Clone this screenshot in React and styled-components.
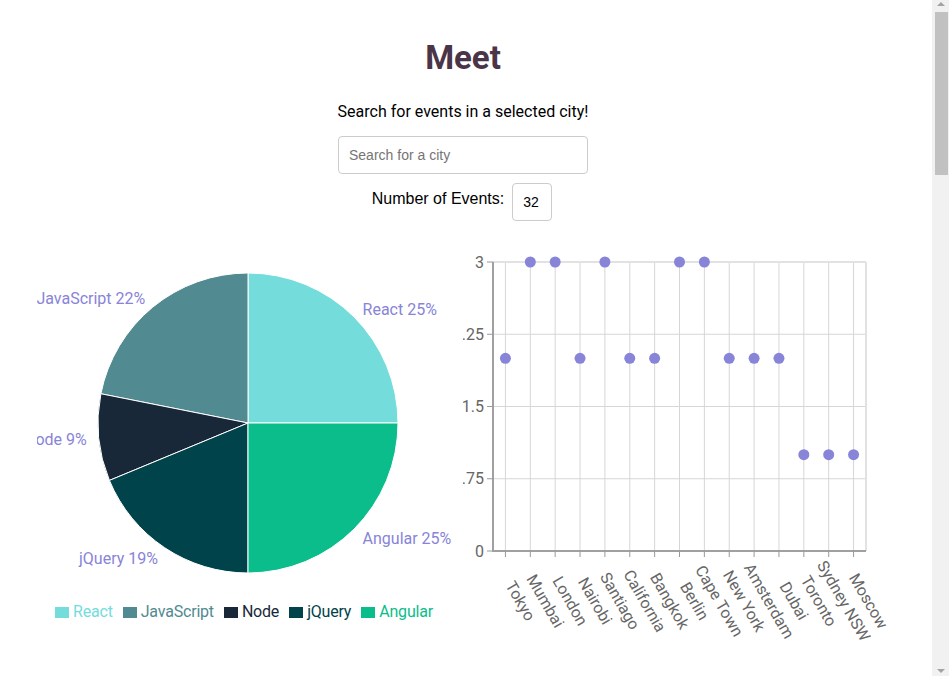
import React from "react";
import styled, { createGlobalStyle } from "styled-components";

const Global = createGlobalStyle`
  html, body { overflow: hidden; }
  body { margin: 0; background: #fff; font-family: Roboto, "Noto Sans", sans-serif; color: #000; }
`;

const Page = styled.div`
  width: 926px;
  display: flex;
  flex-direction: column;
  align-items: center;
`;

const ScrollTrack = styled.div`
  position: fixed;
  top: 0;
  right: 0;
  width: 17px;
  height: 100vh;
  background: #f1f1f1;
`;

const ScrollThumb = styled.div`
  position: absolute;
  top: 12px;
  left: 3px;
  width: 13px;
  height: 163px;
  background: #c1c1c1;
`;

const ScrollArrow = styled.div`
  position: absolute;
  left: 5px;
  width: 0;
  height: 0;
  border-left: 4px solid transparent;
  border-right: 4px solid transparent;
  ${(p) => (p.$down ? "bottom: 3px; border-top: 4px solid #a3a3a3;" : "top: 2px; border-bottom: 4px solid #a3a3a3;")}
`;

const Title = styled.h1`
  margin: 34px 0 0;
  font-size: 33px;
  line-height: 48px;
  font-weight: 700;
  color: #4a3447;
`;

const Subtitle = styled.p`
  margin: 18px 0 0;
  font-size: 16px;
  line-height: 24px;
`;

const CityInput = styled.input`
  margin-top: 12px;
  box-sizing: border-box;
  width: 250px;
  height: 38px;
  padding: 0 10px;
  border: 1px solid #ccc;
  border-radius: 4px;
  font-family: "Liberation Sans", Arial, sans-serif;
  font-size: 14px;
  color: #000;
  outline: none;
  &::placeholder { color: #757575; }
`;

const NumberRow = styled.div`
  margin-top: 9px;
  margin-left: -2px;
  display: flex;
  align-items: center;
  gap: 8px;
`;

const NumberLabel = styled.label`
  font-family: "Liberation Sans", Arial, sans-serif;
  font-size: 16px;
  margin-top: -6px;
`;

const NumberInput = styled.input`
  box-sizing: border-box;
  width: 40px;
  height: 38px;
  padding: 0 10px;
  border: 1px solid #ccc;
  border-radius: 4px;
  font-family: "Liberation Sans", Arial, sans-serif;
  font-size: 14px;
  color: #000;
  outline: none;
  -moz-appearance: textfield;
  &::-webkit-outer-spin-button,
  &::-webkit-inner-spin-button { -webkit-appearance: none; margin: 0; }
`;

const ChartsRow = styled.div`
  margin-top: 9px;
  display: flex;
`;

const ChartBox = styled.div`
  width: 426px;
  display: flex;
  flex-direction: column;
`;

const ChartSvg = styled.svg`
  display: block;
  overflow: hidden;
  font-family: Roboto, "Noto Sans", sans-serif;
  font-size: 16px;
`;

const Legend = styled.ul`
  margin: 0;
  padding: 0 12px 0 0;
  list-style: none;
  display: flex;
  justify-content: center;
  gap: 10px;
  line-height: 24px;
  font-size: 16px;
  letter-spacing: -0.2px;
`;

const LegendItem = styled.li`
  display: flex;
  align-items: center;
  color: ${(p) => p.$color};
`;

const LegendSwatch = styled.span`
  width: 14px;
  height: 11px;
  margin-right: 4px;
  background: ${(p) => p.$color};
`;

const pieData = [
  { name: "React", value: 8, color: "#75dcdc" },
  { name: "JavaScript", value: 7, color: "#518a90" },
  { name: "Node", value: 3, color: "#182838" },
  { name: "jQuery", value: 6, color: "#01434a" },
  { name: "Angular", value: 8, color: "#0bbd8a" },
];

const scatterData = [
  ["Tokyo", 2], ["Mumbai", 3], ["London", 3], ["Nairobi", 2], ["Santiago", 3],
  ["California", 2], ["Bangkok", 2], ["Berlin", 3], ["Cape Town", 3], ["New York", 2],
  ["Amsterdam", 2], ["Dubai", 2], ["Toronto", 1], ["Sydney NSW", 1], ["Moscow", 1],
];

const rad = (d) => (d * Math.PI) / 180;

function PieChart() {
  const cx = 211, cy = 193, r = 150, lr = 162;
  const total = pieData.reduce((s, d) => s + d.value, 0);
  let start = 0;
  const slices = pieData.map((d) => {
    const sweep = (d.value / total) * 360;
    const a0 = start, a1 = start + sweep;
    start = a1;
    const x0 = cx + r * Math.cos(rad(a0)), y0 = cy - r * Math.sin(rad(a0));
    const x1 = cx + r * Math.cos(rad(a1)), y1 = cy - r * Math.sin(rad(a1));
    const large = sweep > 180 ? 1 : 0;
    const path = `M${cx},${cy} L${x0},${y0} A${r},${r} 0 ${large} 0 ${x1},${y1} Z`;
    const mid = (a0 + a1) / 2;
    const lx = cx + lr * Math.cos(rad(mid)), ly = cy - lr * Math.sin(rad(mid));
    return { ...d, path, lx, ly, pct: Math.round((d.value / total) * 100) };
  });
  return (
    <ChartBox>
      <ChartSvg width="426" height="370">
        {slices.map((s) => (
          <path key={s.name} d={s.path} fill={s.color} stroke="#fff" strokeWidth="1" />
        ))}
        {slices.map((s) => (
          <text key={s.name + "l"} x={s.lx} y={s.ly + 1} fill="#8884d8" dominantBaseline="central"
            textAnchor={s.lx > cx ? "start" : "end"}>
            {`${s.name} ${s.pct}%`}
          </text>
        ))}
      </ChartSvg>
      <Legend>
        {pieData.map((d) => (
          <LegendItem key={d.name} $color={d.color}>
            <LegendSwatch $color={d.color} />
            {d.name}
          </LegendItem>
        ))}
      </Legend>
    </ChartBox>
  );
}

function ScatterChart() {
  const left = 30, right = 403, top = 32, bottom = 321;
  const step = (right - left) / scatterData.length;
  const xs = scatterData.map((_, i) => left + step * (i + 0.5));
  const yOf = (v) => top + ((3 - v) / 3) * (bottom - top);
  const ticks = [0, 0.75, 1.5, 2.25, 3];
  return (
    <ChartBox>
      <ChartSvg width="426" height="420">
        {ticks.map((t) => (
          <line key={"h" + t} x1={left} x2={right} y1={yOf(t)} y2={yOf(t)} stroke="#d6d6d6" />
        ))}
        {xs.map((x, i) => (
          <line key={"v" + i} x1={x} x2={x} y1={top} y2={bottom} stroke="#d6d6d6" />
        ))}
        <line x1={right} x2={right} y1={top} y2={bottom} stroke="#e2e2e2" strokeWidth="2" />
        <line x1={left} x2={right} y1={top} y2={top} stroke="#e2e2e2" strokeWidth="2" />
        <line x1={left} x2={left} y1={top} y2={bottom + 1} stroke="#a0a0a0" strokeWidth="2" />
        <line x1={left - 1} x2={right} y1={bottom} y2={bottom} stroke="#a0a0a0" strokeWidth="2" />
        {ticks.map((t) => (
          <g key={"yt" + t}>
            <line x1={left - 6} x2={left} y1={yOf(t)} y2={yOf(t)} stroke="#999" />
            <text x={left - 9} y={yOf(t)} fill="#666" textAnchor="end" dominantBaseline="central">{t}</text>
          </g>
        ))}
        {xs.map((x, i) => (
          <g key={"xt" + i}>
            <line x1={x} x2={x} y1={bottom} y2={bottom + 6} stroke="#999" />
            <text x={x + 15} y={371} fill="#666" textAnchor="middle" dominantBaseline="central"
              transform={`rotate(60 ${x + 15} 371)`}>
              {scatterData[i][0]}
            </text>
          </g>
        ))}
        {xs.map((x, i) => (
          <circle key={"c" + i} cx={x} cy={yOf(scatterData[i][1])} r="5.5" fill="#8884d8" />
        ))}
      </ChartSvg>
    </ChartBox>
  );
}

export default function App() {
  return (
    <Page>
      <Global />
      <Title>Meet</Title>
      <Subtitle>Search for events in a selected city!</Subtitle>
      <CityInput type="text" placeholder="Search for a city" />
      <NumberRow>
        <NumberLabel>Number of Events:</NumberLabel>
        <NumberInput type="number" defaultValue={32} />
      </NumberRow>
      <ChartsRow>
        <PieChart />
        <ScatterChart />
      </ChartsRow>
      <ScrollTrack>
        <ScrollArrow />
        <ScrollThumb />
        <ScrollArrow $down />
      </ScrollTrack>
    </Page>
  );
}
